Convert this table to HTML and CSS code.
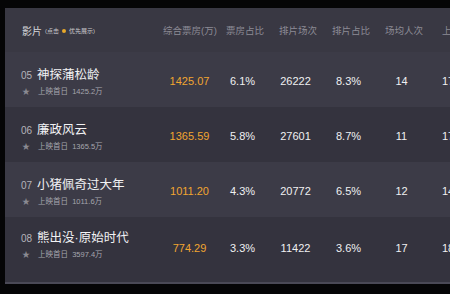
FILE: index.html
```html
<!DOCTYPE html>
<html lang="zh">
<head>
<meta charset="utf-8">
<link rel="stylesheet" href="styles.css">
</head>
<body>
<div class="board">
  <div class="head">
    <div class="hname"><span class="hmain">影片</span><span class="hnote">(点击 <i class="dot"></i> 优先展示)</span></div>
    <div class="hc">综合票房(万)</div>
    <div class="hc">票房占比</div>
    <div class="hc">排片场次</div>
    <div class="hc">排片占比</div>
    <div class="hc">场均人次</div>
    <div class="hc last">上座率</div>
  </div>
  <div class="row light">
    <div class="name">
      <div class="line1"><span class="rank">05</span><span class="title">神探蒲松龄</span></div>
      <div class="line2"><span class="star">★</span><span class="sub">上映首日&nbsp; 1425.2万</span></div>
    </div>
    <div class="c box">1425.07</div>
    <div class="c">6.1%</div>
    <div class="c">26222</div>
    <div class="c">8.3%</div>
    <div class="c">14</div>
    <div class="c last">17</div>
  </div>
  <div class="row dark">
    <div class="name">
      <div class="line1"><span class="rank">06</span><span class="title">廉政风云</span></div>
      <div class="line2"><span class="star">★</span><span class="sub">上映首日&nbsp; 1365.5万</span></div>
    </div>
    <div class="c box">1365.59</div>
    <div class="c">5.8%</div>
    <div class="c">27601</div>
    <div class="c">8.7%</div>
    <div class="c">11</div>
    <div class="c last">17</div>
  </div>
  <div class="row light">
    <div class="name">
      <div class="line1"><span class="rank">07</span><span class="title">小猪佩奇过大年</span></div>
      <div class="line2"><span class="star">★</span><span class="sub">上映首日&nbsp; 1011.6万</span></div>
    </div>
    <div class="c box">1011.20</div>
    <div class="c">4.3%</div>
    <div class="c">20772</div>
    <div class="c">6.5%</div>
    <div class="c">12</div>
    <div class="c last">14</div>
  </div>
  <div class="row dark tall">
    <div class="name">
      <div class="line1"><span class="rank">08</span><span class="title">熊出没·原始时代</span></div>
      <div class="line2"><span class="star">★</span><span class="sub">上映首日&nbsp; 3597.4万</span></div>
    </div>
    <div class="c box">774.29</div>
    <div class="c">3.3%</div>
    <div class="c">11422</div>
    <div class="c">3.6%</div>
    <div class="c">17</div>
    <div class="c last">18</div>
  </div>
</div>
</body>
</html>
```
FILE: styles.css
```css
html, body {
  margin: 0;
  padding: 0;
  background: #050506;
  width: 450px;
  height: 294px;
  overflow: hidden;
  font-family: "Liberation Sans", "Noto Sans CJK SC", sans-serif;
}
.board {
  margin: 8px 0 0 5px;
  width: 470px;
  border-bottom: 2px solid #4a4956;
}
.head, .row {
  display: grid;
  grid-template-columns: 158px 53px 53px 53px 53px 53px 100px;
  align-items: center;
}
.head {
  height: 44px;
  background: #393843;
}
.row { height: 55px; }
.row.tall { height: 65px; align-items: start; padding-top: 10px; box-sizing: border-box; }
.row.tall .name { margin-top: 0; }
.row.tall .c { margin-top: 13px; }
.light { background: #3c3b47; }
.dark { background: #34333e; }
.hname {
  padding-left: 17px;
  display: flex;
  align-items: center;
  gap: 3px;
}
.hmain { color: #d8d8dc; font-size: 10px; }
.hnote { color: #c8c8cc; font-size: 6px; display: flex; align-items: center; }
.dot {
  display: inline-block;
  width: 4px;
  height: 4px;
  border-radius: 50%;
  background: #e8a82a;
  margin: 2px 3px 0 3px;
}
.hc {
  text-align: center;
  color: #8c8b95;
  font-size: 9.5px;
  padding-left: 5px;
  white-space: nowrap;
}
.hc:nth-child(2) { padding-left: 0; }
.hc.last, .c.last { text-align: left; padding-left: 14px; }
.name { padding-left: 16px; margin-top: 1px; }
.line1 { display: flex; align-items: baseline; }
.rank { color: #b4b4ba; font-size: 10px; width: 16px; }
.title { color: #f2f2f4; font-size: 12.5px; }
.line2 { display: flex; align-items: center; margin-top: 2px; }
.star { color: #8a8a92; font-size: 8px; width: 16px; padding-left: 1px; }
.sub { color: #a6a6ae; font-size: 7.5px; }
.c {
  text-align: center;
  color: #f0f0f2;
  font-size: 11px;
  padding-top: 2px;
}
.c.box { color: #f1a530; }
```
